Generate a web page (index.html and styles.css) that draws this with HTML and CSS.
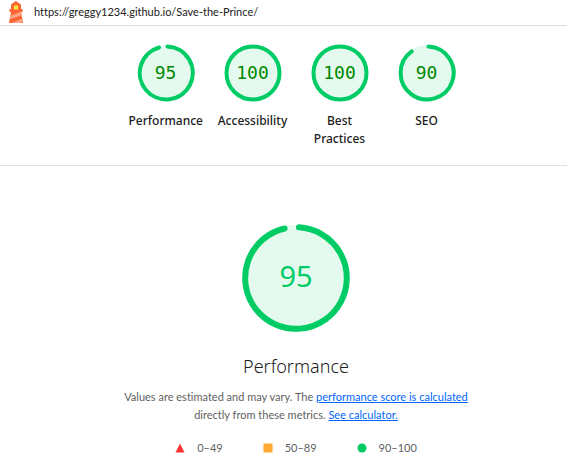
FILE: index.html
```html
<!DOCTYPE html>
<html lang="en">
<head>
<meta charset="utf-8">
<meta name="viewport" content="width=device-width, initial-scale=1">
<title>Lighthouse Report</title>
<link rel="stylesheet" href="styles.css">
</head>
<body>
<header class="topbar">
  <svg class="logo" viewBox="0 0 16 22" aria-hidden="true">
    <path fill="#ff6433" d="M7.800 0 13 3.500V8h1.500v3H13l2 11H1l2-11H1.500V8H3V3.500z"/>
    <path fill="#ffa385" d="M2.300 14.800 13.300 10.800l.7 3.200L1.600 18.400zM3.500 22 14.600 17.600l.4 3.200L12 22z"/>
    <path fill="#ffeb3b" d="M5.800 4.500h4.400v4H5.800z"/>
  </svg>
  <a class="url" href="https://greggy1234.github.io/Save-the-Prince/">https://greggy1234.github.io/Save-the-Prince/</a>
</header>
<main>
  <nav class="scores">
    <a class="score" href="#performance">
      <span class="gauge"><svg viewBox="0 0 58 58"><circle class="disc" cx="29" cy="29" r="28"/><path class="arc" d="M30.500 2.500A26.500 26.500 0 1 1 22 3.500"/></svg><span class="value">95</span></span>
      <span class="label">Performance</span>
    </a>
    <a class="score" href="#accessibility">
      <span class="gauge"><svg viewBox="0 0 58 58"><circle class="disc" cx="29" cy="29" r="28"/><circle class="arc" cx="29" cy="29" r="26.500"/></svg><span class="value">100</span></span>
      <span class="label">Accessibility</span>
    </a>
    <a class="score" href="#best-practices">
      <span class="gauge"><svg viewBox="0 0 58 58"><circle class="disc" cx="29" cy="29" r="28"/><circle class="arc" cx="29" cy="29" r="26.500"/></svg><span class="value">100</span></span>
      <span class="label">Best Practices</span>
    </a>
    <a class="score" href="#seo">
      <span class="gauge"><svg viewBox="0 0 58 58"><circle class="disc" cx="29" cy="29" r="28"/><path class="arc" d="M30.500 2.500A26.500 26.500 0 1 1 13.700 7.400"/></svg><span class="value">90</span></span>
      <span class="label">SEO</span>
    </a>
  </nav>
  <section class="category" id="performance">
    <div class="gauge gauge-large"><svg viewBox="0 0 108 108"><circle class="disc" cx="54" cy="54" r="53"/><path class="arc" d="M57 3.300A50.800 50.800 0 1 1 42.600 4.500"/></svg><span class="value">95</span></div>
    <h1>Performance</h1>
    <p class="description">Values are estimated and may vary. The <a href="#score">performance score is calculated</a> directly from these metrics. <a href="#calculator">See calculator.</a></p>
    <ul class="scale">
      <li><svg viewBox="0 0 10 10"><path fill="#f33" d="M5 .5 9.500 9.500H.5z"/></svg>0–49</li>
      <li><svg viewBox="0 0 10 10"><path fill="#fa3" d="M.5.5h9v9h-9z"/></svg>50–89</li>
      <li><svg viewBox="0 0 10 10"><circle fill="#0c6" cx="5" cy="5" r="4.500"/></svg>90–100</li>
    </ul>
  </section>
</main>
</body>
</html>
```

FILE: styles.css
```css
* { box-sizing: border-box; }
body {
  margin: 0;
  background: #fff;
  color: #212121;
  font-family: Lato, "Open Sans", sans-serif;
  font-size: 11px;
  font-variant-ligatures: none;
  line-height: 18px;
}
.topbar {
  display: flex;
  align-items: center;
  gap: 10px;
  height: 26px;
  padding: 0 8px 2px;
  border-bottom: 1px solid #dadce0;
}
.logo { width: 16px; height: 22px; }
.url { color: inherit; text-decoration: none; }
.scores {
  display: flex;
  justify-content: center;
  height: 140px;
  padding: 18px 0 0 25px;
  border-bottom: 1px solid #e0e0e0;
}
.score {
  display: flex;
  flex-direction: column;
  align-items: center;
  gap: 10px;
  width: 87px;
  color: inherit;
  text-align: center;
  text-decoration: none;
}
.gauge {
  display: grid;
  place-items: center;
  width: 58px;
  height: 58px;
}
.gauge > * { grid-area: 1 / 1; }
.gauge svg { width: 100%; height: 100%; }
.disc { fill: #e5faef; }
.arc {
  fill: none;
  stroke: #0c6;
  stroke-width: 4;
  stroke-linecap: round;
}
.value {
  color: #080;
  font-family: "DejaVu Sans Mono", monospace;
  font-size: 18px;
}
.label {
  width: 74px;
  font-family: "Noto Sans", sans-serif;
  font-size: 12px;
  font-weight: 500;
}
.category {
  display: flex;
  flex-direction: column;
  align-items: center;
  padding: 58px 0 0 25px;
}
.gauge-large { width: 108px; height: 108px; }
.gauge-large .arc { stroke-width: 6; }
.gauge-large .value {
  padding-bottom: 4px;
  color: #0c6;
  font-family: "Noto Sans", sans-serif;
  font-size: 29px;
}
h1 {
  margin: 20px 0 8px;
  font-family: "Noto Sans", sans-serif;
  font-size: 18px;
  font-weight: 300;
  line-height: 28px;
}
.description {
  max-width: 360px;
  margin: 0;
  color: #616161;
  text-align: center;
}
.description a { color: #06f; }
.scale {
  display: flex;
  gap: 40px;
  margin: 15px 0 0;
  padding: 0;
  color: #616161;
  list-style: none;
}
.scale li { display: flex; align-items: center; gap: 12px; }
.scale svg { width: 10px; height: 10px; }
```
